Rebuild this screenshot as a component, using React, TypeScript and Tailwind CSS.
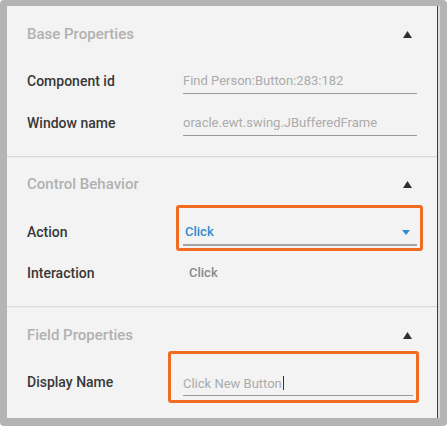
import React from 'react';

const Caret = () => (
  <svg width="9" height="7" viewBox="0 0 9 7" className="block">
    <path d="M4.5 0 L9 7 L0 7 Z" fill="#2f2f2f" />
  </svg>
);

const SectionHeader = ({ title }: { title: string }) => (
  <div className="flex h-4 items-center justify-between pr-[25px]">
    <span className="text-[15px] font-medium leading-4 text-[#b1b1b1]">{title}</span>
    <Caret />
  </div>
);

const Row = ({ label, h = 'h-[42px]', children }: { label: string; h?: string; children: React.ReactNode }) => (
  <div className={`flex items-start pt-[13px] ${h}`}>
    <div className="w-[156px] shrink-0 text-[14px] font-medium leading-4 text-[#383838]">{label}</div>
    <div className="relative w-[234px]">{children}</div>
  </div>
);

const Divider = () => <div className="h-[2px] border-t border-[#d9d9d9] bg-[#ececec]" />;

export default function App() {
  return (
    <div
      className="h-[426px] w-[447px] rounded-[4px] bg-[#b4b4b4] pb-[8px] pl-[7px] pr-[7px] pt-[6px]"
      style={{ fontFamily: 'Roboto, "Liberation Sans", sans-serif' }}
    >
      <div className="flex h-full">
        <div className="flex h-full flex-1 flex-col bg-[#f3f3f3] border-r border-[#3c3c3c]">
          <section className="h-[150px] pl-[20px] pt-[20px]">
            <SectionHeader title="Base Properties" />
            <div className="h-[18px]" />
            <Row label="Component id">
              <div className="border-b border-[#9b9b9b] pb-[4px] text-[13px] leading-4 text-[#ababab]">
                Find Person:Button:283:182
              </div>
            </Row>
            <Row label="Window name">
              <div className="border-b border-[#9b9b9b] pb-[4px] text-[13px] leading-4 text-[#ababab]">
                oracle.ewt.swing.JBufferedFrame
              </div>
            </Row>
          </section>
          <Divider />
          <section className="h-[148px] pl-[20px] pt-[18px]">
            <SectionHeader title="Control Behavior" />
            <div className="h-[19px]" />
            <Row label="Action" h="h-[41px]">
              <div className="flex items-center justify-between border-b-2 border-[#a3a3a3] pb-[4px] pl-[2px] pr-[7px] text-[13px] font-medium leading-4 text-[#2d8bd1]">
                <span>Click</span>
                <svg width="8" height="5" viewBox="0 0 8 5">
                  <path d="M0 0 L8 0 L4 5 Z" fill="#2d8bd1" />
                </svg>
              </div>
              <div className="pointer-events-none absolute -left-[7px] -right-[6px] -top-[19px] -bottom-[5px] rounded-[3px] border-[3px] border-[#ef6c22]" />
            </Row>
            <Row label="Interaction">
              <div className="pl-[6px] text-[13px] font-medium leading-4 text-[#8a8a8a]">Click</div>
            </Row>
          </section>
          <Divider />
          <section className="flex-1 pl-[20px] pt-[19px]">
            <SectionHeader title="Field Properties" />
            <div className="h-[18px]" />
            <Row label="Display Name">
              <div className="mr-[4px] border-b border-[#9b9b9b] pb-[3px] text-[13px] leading-4 text-[#ababab]">
                Click New Button
                <span className="ml-px inline-block h-[14px] w-px translate-y-[2px] bg-[#333]" />
              </div>
              <div className="pointer-events-none absolute -left-[15px] right-[-2px] -top-[23px] -bottom-[7px] rounded-[3px] border-[3px] border-[#ef6c22]" />
            </Row>
          </section>
        </div>
        <div className="w-[2px] bg-[#dcdcdc]" />
      </div>
    </div>
  );
}
